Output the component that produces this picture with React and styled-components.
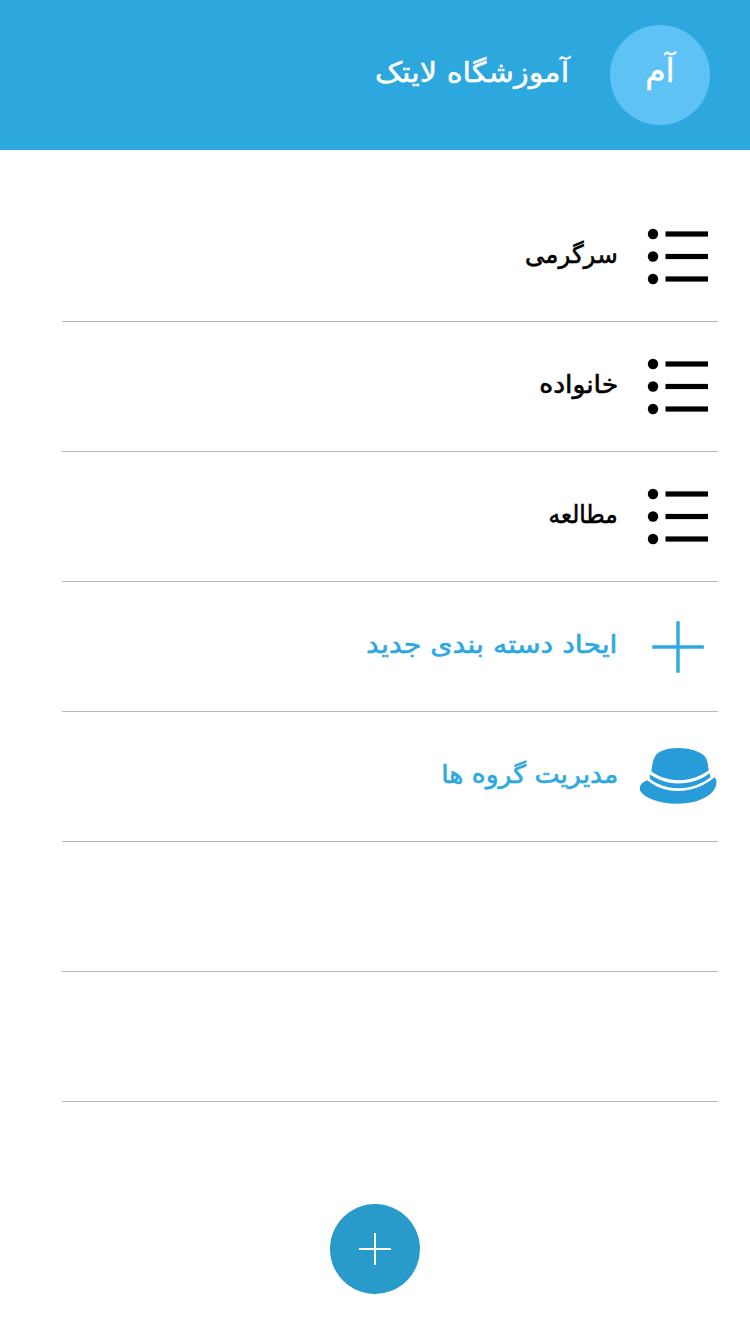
import React from 'react';
import styled, { createGlobalStyle } from 'styled-components';

const GlobalStyle = createGlobalStyle`
  * { box-sizing: border-box; }
  body {
    margin: 0;
    background: #fff;
    font-family: "DejaVu Sans", sans-serif;
  }
`;

const Screen = styled.div`
  direction: rtl;
  display: flex;
  flex-direction: column;
  width: 750px;
  height: 1334px;
  overflow: hidden;
  background: #fff;
`;

const Header = styled.header`
  display: flex;
  align-items: center;
  height: 150px;
  flex: none;
  padding: 0 40px;
  gap: 41px;
  background: #2ca8df;
  color: #fff;
`;

const Avatar = styled.div`
  width: 100px;
  height: 100px;
  flex: none;
  border-radius: 50%;
  background: #5ec3f4;
  font-size: 33px;
  line-height: 92px;
  text-align: center;
  -webkit-text-stroke: 0.4px currentColor;
`;

const Title = styled.h1`
  margin: 0;
  padding-bottom: 5px;
  font-size: 28px;
  line-height: 40px;
  font-weight: 400;
  white-space: nowrap;
  transform: scaleX(1.084);
  transform-origin: right center;
  -webkit-text-stroke: 0.5px currentColor;
`;

const Label = styled.span`
  padding-bottom: 4px;
  font-size: 25px;
  line-height: 40px;
  white-space: nowrap;
  transform: scaleX(${({ $stretch }) => $stretch});
  transform-origin: right center;
  -webkit-text-stroke: 0.6px currentColor;
`;

const List = styled.ul`
  list-style: none;
  margin: 42px 32px 0 62px;
  padding: 0;
`;

const Row = styled.li`
  display: flex;
  align-items: center;
  gap: 20px;
  height: 130px;
  border-bottom: 1px solid #b9b9b9;
  color: ${({ $accent }) => ($accent ? '#2da9e0' : '#000')};
`;

const IconBox = styled.span`
  display: flex;
  width: 80px;
  height: 80px;
  flex: none;
`;

const Footer = styled.footer`
  display: flex;
  justify-content: center;
  margin-top: 102px;
`;

const AddButton = styled.button`
  display: flex;
  align-items: center;
  justify-content: center;
  width: 90px;
  height: 90px;
  padding: 0;
  border: 0;
  border-radius: 50%;
  background: #289bca;
`;

const ListIcon = () => (
  <svg width="80" height="80" viewBox="0 0 80 80">
    {[17, 39.5, 62].map((y) => (
      <g key={y}>
        <circle cx="15" cy={y} r="5.2" />
        <rect x="27.5" y={y - 2.6} width="42.5" height="5.2" />
      </g>
    ))}
  </svg>
);

const PlusIcon = () => (
  <svg width="80" height="80" viewBox="0 0 80 80">
    <path d="M40 14.2v51.6M14.2 40h51.6" stroke="#2da9e0" strokeWidth="3.4" />
  </svg>
);

const HatIcon = () => (
  <svg width="80" height="80" viewBox="0 0 80 80" fill="#289bd9">
    <path d="M13.3 34.5C13.9 29 14.8 23.500 17 19.500C19.500 14.500 29.500 11.100 40 11.100C50.500 11.100 61.500 14.200 66 18.600C69.600 22 69.700 27 70.800 33.300C62 40 51 43.300 41 43.200C30 43 20.500 39.500 13.300 34.500Z" />
    <path d="M12 37.500C19 42.500 29 46.400 40 46.600C52 46.600 64 42.500 71.500 36.300L72.500 40.200C64 46.500 53 51.200 40 51.300C28 51.200 18.500 47 11.800 41.800Z" />
    <path d="M9.300 43.200C17 49.500 27 54 40 54C54 53.900 67 48.500 76.500 40.300C79.200 43.500 79.300 48 76 53C70 61.500 56 66.800 39 66.800C21 66.800 7 61 2.800 54.800C.4 50.500 2.500 45.500 9.300 43.200Z" />
  </svg>
);

const items = [
  { label: 'سرگرمی', Icon: ListIcon, stretch: 0.98 },
  { label: 'خانواده', Icon: ListIcon, stretch: 1.065 },
  { label: 'مطالعه', Icon: ListIcon, stretch: 0.925 },
  { label: 'ایحاد دسته بندی جدید', Icon: PlusIcon, accent: true, stretch: 1.135 },
  { label: 'مدیریت گروه ها', Icon: HatIcon, accent: true, stretch: 1.065 },
  {},
  {},
];

export default function App() {
  return (
    <Screen>
      <GlobalStyle />
      <Header>
        <Avatar>آم</Avatar>
        <Title>آموزشگاه لایتک</Title>
      </Header>
      <List>
        {items.map(({ label, Icon, accent, stretch }, i) => (
          <Row key={i} $accent={accent}>
            {Icon && <IconBox><Icon /></IconBox>}
            {label && <Label $stretch={stretch}>{label}</Label>}
          </Row>
        ))}
      </List>
      <Footer>
        <AddButton aria-label="افزودن">
          <svg width="32" height="32" viewBox="0 0 32 32">
            <path d="M16 0v32M0 16h32" stroke="#fff" strokeWidth="2" />
          </svg>
        </AddButton>
      </Footer>
    </Screen>
  );
}
